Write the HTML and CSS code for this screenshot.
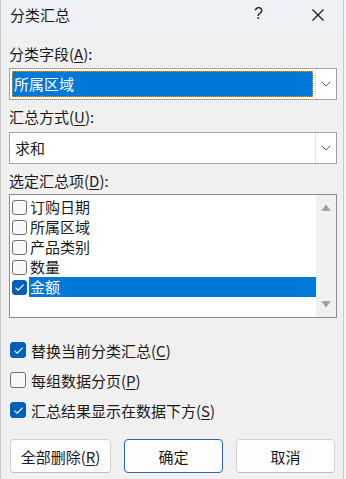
FILE: index.html
```html
<!DOCTYPE html>
<html lang="zh-CN">
<head>
<meta charset="utf-8">
<title>分类汇总</title>
<link rel="stylesheet" href="styles.css">
</head>
<body>
<div class="window">
  <div class="titlebar">
    <span class="title">分类汇总</span>
    <span class="help">?</span>
    <span class="close">
      <svg width="14" height="14" viewBox="0 0 14 14"><path d="M1.5 1.5 L12.5 12.5 M12.5 1.5 L1.5 12.5" stroke="#1a1a1a" stroke-width="1.3" fill="none"/></svg>
    </span>
  </div>
  <div class="content">
    <div class="label l1">分类字段(<u>A</u>):</div>
    <div class="combo">
      <div class="combo-field focused"><span class="sel">所属区域</span></div>
      <div class="combo-btn"><svg width="10" height="6" viewBox="0 0 10 6"><path d="M0.8 0.8 L5 5 L9.2 0.8" stroke="#555" stroke-width="1" fill="none"/></svg></div>
    </div>
    <div class="label l2">汇总方式(<u>U</u>):</div>
    <div class="combo">
      <div class="combo-field"><span class="plain">求和</span></div>
      <div class="combo-btn"><svg width="10" height="6" viewBox="0 0 10 6"><path d="M0.8 0.8 L5 5 L9.2 0.8" stroke="#555" stroke-width="1" fill="none"/></svg></div>
    </div>
    <div class="label l3">选定汇总项(<u>D</u>):</div>
    <div class="listbox">
      <div class="items">
        <div class="item"><span class="cb"></span><span class="txt">订购日期</span></div>
        <div class="item"><span class="cb"></span><span class="txt">所属区域</span></div>
        <div class="item"><span class="cb"></span><span class="txt">产品类别</span></div>
        <div class="item"><span class="cb"></span><span class="txt">数量</span></div>
        <div class="item selected"><span class="cb checked"><svg width="11" height="9" viewBox="0 0 11 9"><path d="M1.5 4.6 L4.2 7.2 L9.6 1.6" stroke="#fff" stroke-width="1.1" fill="none"/></svg></span><span class="txt">金额</span></div>
      </div>
      <div class="scrollbar">
        <svg width="10" height="7" viewBox="0 0 10 7"><path d="M1 6.5 L5 1 L9 6.5 Z" fill="#a3a3a3" stroke="#a3a3a3" stroke-linejoin="round"/></svg>
        <svg width="10" height="7" viewBox="0 0 10 7"><path d="M1 0.5 L5 6 L9 0.5 Z" fill="#a3a3a3" stroke="#a3a3a3" stroke-linejoin="round"/></svg>
      </div>
    </div>
    <div class="options">
      <div class="opt"><span class="box checked"><svg width="11" height="9" viewBox="0 0 11 9"><path d="M1.5 4.6 L4.2 7.2 L9.6 1.6" stroke="#fff" stroke-width="1.1" fill="none"/></svg></span>替换当前分类汇总(<u>C</u>)</div>
      <div class="opt"><span class="box"></span>每组数据分页(<u>P</u>)</div>
      <div class="opt"><span class="box checked"><svg width="11" height="9" viewBox="0 0 11 9"><path d="M1.5 4.6 L4.2 7.2 L9.6 1.6" stroke="#fff" stroke-width="1.1" fill="none"/></svg></span>汇总结果显示在数据下方(<u>S</u>)</div>
    </div>
    <div class="buttons">
      <button class="btn">全部删除(<u>R</u>)</button>
      <button class="btn default">确定</button>
      <button class="btn">取消</button>
    </div>
  </div>
</div>
</body>
</html>
```
FILE: styles.css
```css
html, body {
  margin: 0;
  padding: 0;
  background: #f4f4f4;
}
body {
  width: 346px;
  height: 479px;
  overflow: hidden;
  font-family: "Noto Sans CJK SC", "Noto Sans", sans-serif;
  font-size: 15px;
  color: #1a1a1a;
}
.window {
  width: 342px;
  height: 479px;
  border-left: 1px solid #c9c9c9;
  border-right: 1px solid #c9c9c9;
  background: #f0f0f0;
}
.titlebar {
  height: 33px;
  background: #eef2f7;
  display: flex;
  align-items: center;
  position: relative;
}
.title {
  margin-left: 9px;
  font-size: 15px;
  line-height: 20px;
  margin-top: -3px;
}
.help {
  position: absolute;
  left: 253px;
  top: 4px;
  font-size: 16px;
  line-height: 20px;
  font-family: "Liberation Sans", sans-serif;
}
.close {
  position: absolute;
  left: 310px;
  top: 8px;
  width: 14px;
  height: 14px;
  display: flex;
}
.content {
  padding: 0 6px 0 8px;
}
.label {
  line-height: 20px;
  height: 20px;
}
.l1 { margin-top: 11px; margin-bottom: 4px; }
.l2 { margin-top: 7px; margin-bottom: 5px; }
.l3 { margin-top: 7px; margin-bottom: 3px; }
u { text-decoration-thickness: 1px; text-underline-offset: 2px; }
.combo {
  height: 30px;
  border: 1px solid #a2a2a2;
  background: #fff;
  display: flex;
}
.combo-field {
  flex: 1;
  padding: 2px;
  display: flex;
}
.combo-field .sel {
  flex: 1;
  background: #0078d7;
  color: #fff;
  outline: 1px dotted #e0a040;
  outline-offset: -1px;
  padding-left: 2px;
  line-height: 26px;
}
.combo-field .plain {
  padding-left: 3px;
  line-height: 26px;
}
.combo-btn {
  width: 20px;
  border-left: 1px solid #e3e3e3;
  display: flex;
  align-items: center;
  justify-content: center;
}
.listbox {
  height: 122px;
  border: 1px solid #8c8c8c;
  background: #fff;
  display: flex;
}
.items {
  flex: 1;
  padding-top: 2px;
}
.item {
  height: 20px;
  display: flex;
  align-items: center;
}
.cb {
  width: 13px;
  height: 13px;
  margin-left: 2px;
  margin-right: 2px;
  border: 1px solid #707070;
  border-radius: 3px;
  background: #f8f8f8;
  display: flex;
  align-items: center;
  justify-content: center;
}
.cb.checked {
  background: #005fb8;
  border-color: #005fb8;
}
.txt {
  flex: 1;
  line-height: 20px;
  padding-left: 1px;
}
.item.selected .txt {
  background: #0078d7;
  color: #fff;
}
.scrollbar {
  width: 20px;
  background: #f0f0f0;
  display: flex;
  flex-direction: column;
  justify-content: space-between;
  align-items: center;
  padding: 9px 0 9px;
}
.options {
  margin-top: 17px;
}
.opt {
  height: 30px;
  display: flex;
  align-items: center;
}
.box {
  width: 14px;
  height: 14px;
  margin-left: 1px;
  margin-right: 5px;
  border: 1px solid #707070;
  border-radius: 3px;
  background: #f8f8f8;
  display: flex;
  align-items: center;
  justify-content: center;
}
.box.checked {
  background: #005fb8;
  border-color: #005fb8;
}
.buttons {
  margin-top: 14px;
  display: flex;
  gap: 13px;
  padding-left: 1px;
}
.btn {
  width: 101px;
  height: 34px;
  border: 1px solid #d2d2d2;
  border-bottom-color: #bdbdbd;
  border-radius: 4px;
  background: #fdfdfd;
  font-family: inherit;
  font-size: 15px;
  color: #1a1a1a;
  padding: 0;
}
.btn:nth-child(2), .btn:nth-child(3) { width: 99px; }
.btn.default {
  border-color: #2f64a8;
}
```
